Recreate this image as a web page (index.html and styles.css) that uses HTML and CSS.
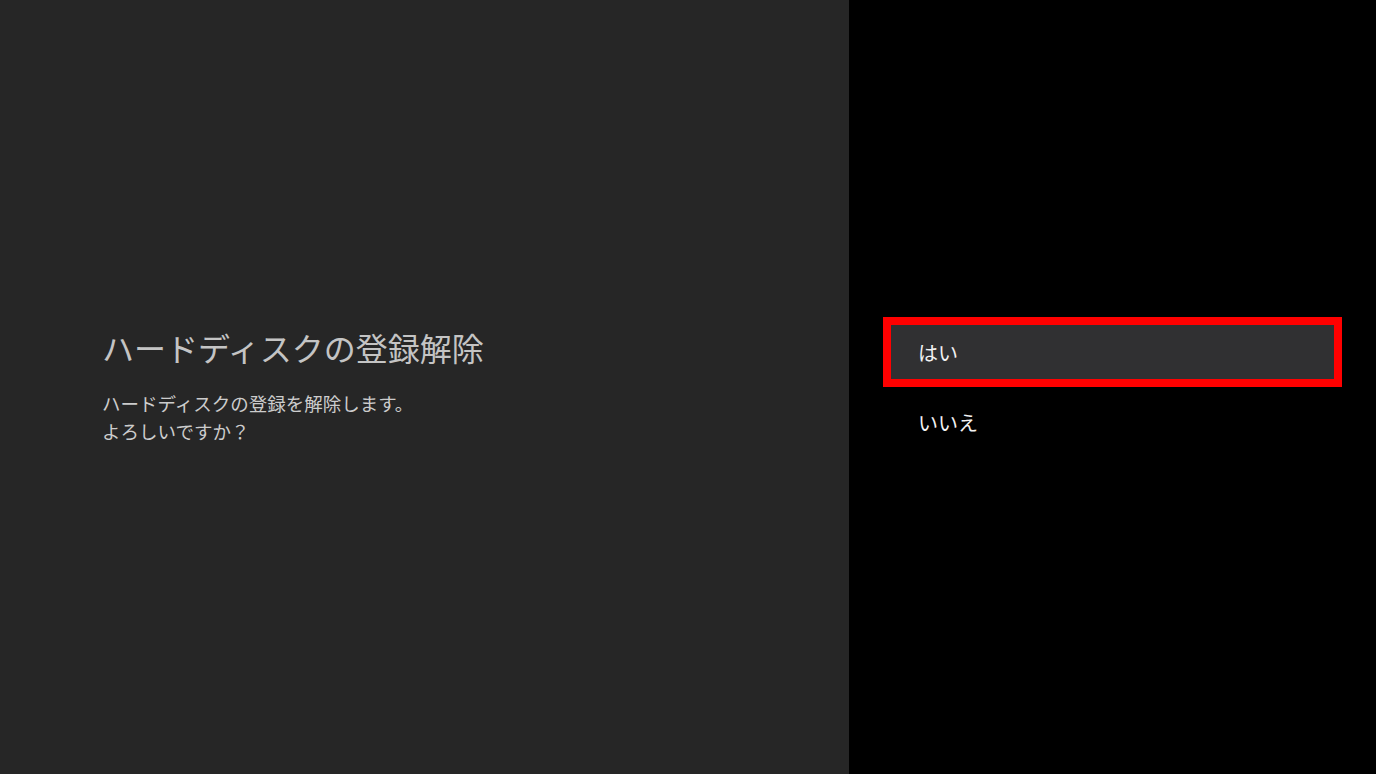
FILE: index.html
```html
<!DOCTYPE html>
<html lang="ja">
<head>
<meta charset="utf-8">
<link rel="stylesheet" href="styles.css">
</head>
<body>
<div class="screen">
  <section class="info">
    <h1 class="title">ハードディスクの登録解除</h1>
    <p class="desc">ハードディスクの登録を解除します。<br>よろしいですか？</p>
  </section>
  <section class="choices">
    <div class="item selected">はい</div>
    <div class="item">いいえ</div>
  </section>
</div>
</body>
</html>
```
FILE: styles.css
```css
html, body {
  margin: 0;
  padding: 0;
  background: #000;
}
.screen {
  display: flex;
  width: 1376px;
  height: 774px;
  font-family: "Noto Sans CJK JP", "Noto Sans", sans-serif;
}
.info {
  width: 849px;
  background: #262626;
  display: flex;
  flex-direction: column;
  justify-content: center;
  padding-left: 102px;
  padding-bottom: 2px;
  box-sizing: border-box;
}
.title {
  margin: 0 0 22px 0;
  font-size: 32px;
  font-weight: 400;
  line-height: 40px;
  color: #c4c4c4;
}
.desc {
  margin: 0;
  font-size: 18.5px;
  line-height: 28px;
  color: #cccccc;
}
.choices {
  flex: 1;
  background: #000;
  display: flex;
  flex-direction: column;
  justify-content: center;
  padding: 0 34px;
}
.item {
  height: 70px;
  box-sizing: border-box;
  border: 8px solid transparent;
  padding-left: 27px;
  display: flex;
  align-items: center;
  font-size: 20px;
  color: #f2f2f2;
}
.item.selected {
  border-color: #ff0000;
  background: #303032;
}
```
